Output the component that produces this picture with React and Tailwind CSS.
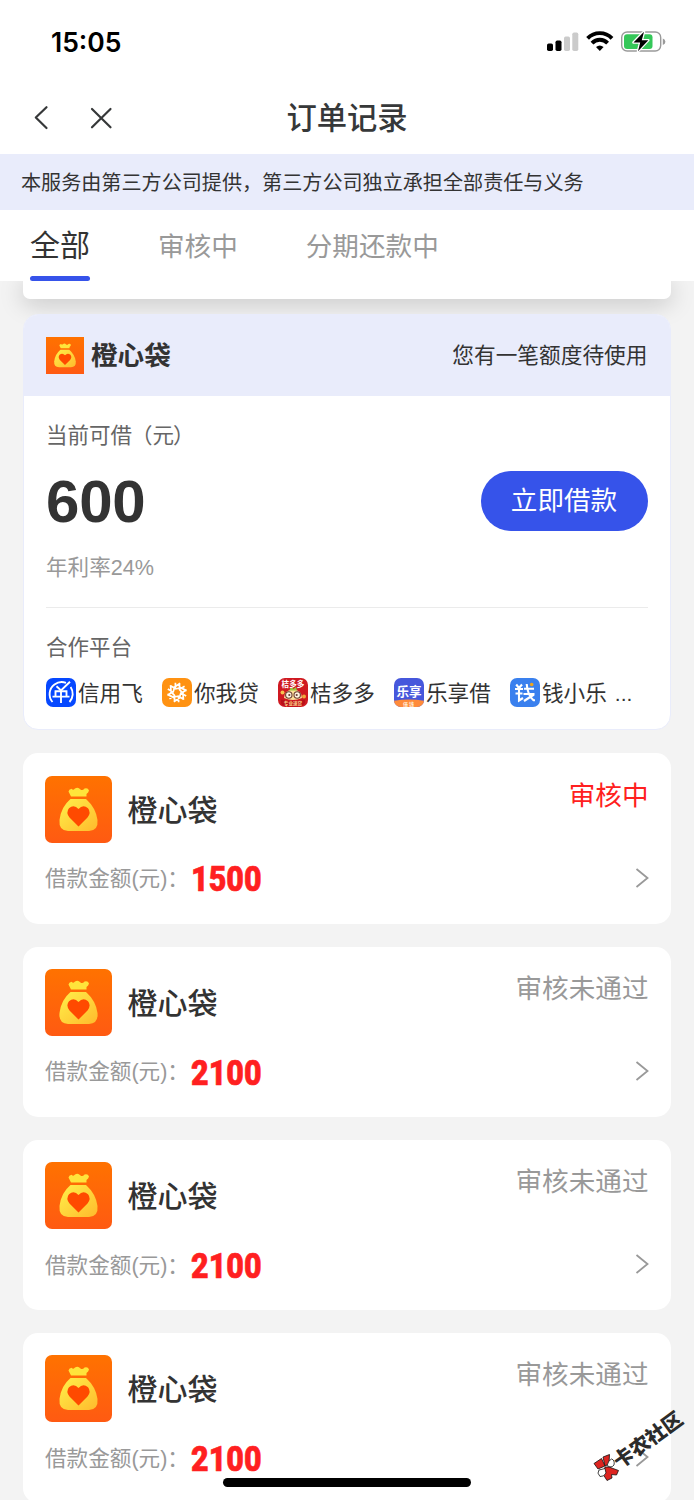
import React from 'react';

const orders = [
  { id: 1, amount: '1500', status: '审核中', pending: true },
  { id: 2, amount: '2100', status: '审核未通过' },
  { id: 3, amount: '2100', status: '审核未通过' },
  { id: 4, amount: '2100', status: '审核未通过' },
];

const MoneyBag = ({ className }) => (
  <svg viewBox="0 0 67 67" preserveAspectRatio="none" className={className}>
    <defs>
      <linearGradient id="bagBg" x1="0" y1="0" x2="0" y2="1">
        <stop offset="0" stopColor="#ff7200" />
        <stop offset="1" stopColor="#ff5a12" />
      </linearGradient>
      <linearGradient id="bagFill" x1="0" y1="0" x2="1" y2="1">
        <stop offset="0" stopColor="#fff04a" />
        <stop offset="1" stopColor="#ffba2c" />
      </linearGradient>
    </defs>
    <rect width="67" height="67" fill="url(#bagBg)" />
    <path
      d="M26 20.5 L23.5 15.5 Q23.8 13.3 26.5 12.7 Q28.5 14.7 30 12.5 Q33 10.5 35.5 13.5 Q37.5 15 39.5 12.5 Q43 11.5 44 14.5 Q43.5 16.5 41.5 18 L41.5 20.5 Z"
      fill="#ffe43b"
    />
    <path
      d="M25.5 23 H41 Q51 32 52.5 44 Q53.5 54.5 44 55 H23 Q13.5 54.5 14.5 44 Q16 31 25.5 23 Z"
      fill="url(#bagFill)"
    />
    <path
      d="M33.5 50.5 L24.5 41.5 Q20.5 36.5 24 32.2 Q29 28 33.5 33 Q38 28 43 32.2 Q46.5 36.5 42.5 41.5 Z"
      fill="#ff4a00"
    />
  </svg>
);

const XinyongfeiIcon = () => (
  <svg viewBox="0 0 30 29" className="h-[29px] w-[30px] shrink-0">
    <rect width="30" height="29" rx="7" fill="#0648ff" />
    <g fill="none" stroke="#fff" strokeWidth="1.9">
      <path d="M6.5 24 A12 12 0 0 1 8.5 6.5 A12 12 0 0 1 20 4.8" />
      <path d="M24.6 9 A12 12 0 0 1 23.5 24" />
      <path d="M10.5 8.3 L15 12.5 L24 3.8" />
      <path d="M8.6 13.2 H21.4 M9.5 13 V18 M20.5 13 V18 M15 13 V25" />
      <path d="M6.5 18.6 H23.5" />
    </g>
  </svg>
);

const NiwodaiIcon = () => (
  <svg viewBox="0 0 30 29" className="h-[29px] w-[30px] shrink-0">
    <rect width="30" height="29" rx="7" fill="#ff9212" />
    <g fill="none" stroke="#fff" strokeWidth="1.7">
      {[0, 60, 120, 180, 240, 300].map((angle) => (
        <path
          key={angle}
          d="M11.5 9.8 L18.2 5.2 M13.4 4.8 V11.5 M17.5 6 V11 M13.2 11 L17.8 10"
          transform={`rotate(${angle} 15 14.5)`}
        />
      ))}
    </g>
    <circle cx="15" cy="14.5" r="1.6" fill="#ff9212" />
  </svg>
);

const JuduoduoIcon = () => (
  <svg viewBox="0 0 30 29" className="h-[29px] w-[30px] shrink-0">
    <rect width="30" height="29" rx="7" fill="#cf1921" />
    <circle cx="4.5" cy="14.5" r="2" fill="#f8c34f" />
    <circle cx="26" cy="18.5" r="2" fill="#f0a83c" />
    <path d="M6 20 Q6 12 15 11.5 Q24 12 24 20 Q15 24 6 20Z" fill="#ffe09b" />
    <path d="M11 12.5 L13.5 9 L15.5 11 L18 9 L19 12.5Z" fill="#98c83e" />
    <g fill="#fff5e2" stroke="#6c3c32" strokeWidth="1.1">
      <circle cx="10.8" cy="17" r="3.2" />
      <circle cx="19.2" cy="17" r="3.2" />
    </g>
    <circle cx="11.3" cy="17" r="1.1" fill="#6c3c32" />
    <circle cx="18.7" cy="17" r="1.1" fill="#6c3c32" />
    <path d="M3 21.5 Q15 25 27 21.5 V25 Q25 28.5 20 28.5 H10 Q4 28 3 25Z" fill="#b81018" />
    <text x="15" y="8.9" fontSize="7.6" fontWeight="700" textAnchor="middle" fill="#fff">桔多多</text>
    <text x="15" y="27.2" fontSize="4.6" fontWeight="700" textAnchor="middle" fill="#ffd08a">专业速贷</text>
  </svg>
);

const LexiangIcon = () => (
  <svg viewBox="0 0 30 29" className="h-[29px] w-[30px] shrink-0">
    <defs>
      <clipPath id="lexiangClip">
        <rect width="30" height="29" rx="7" />
      </clipPath>
    </defs>
    <g clipPath="url(#lexiangClip)">
      <rect width="30" height="29" fill="#4657dc" />
      <path d="M0 22.7 Q15 20.5 30 22.7 V29 H0Z" fill="#ff8b3a" />
      <text x="15" y="17.5" fontSize="12.6" fontWeight="700" textAnchor="middle" fill="#fff">乐享</text>
      <text x="15" y="27.6" fontSize="5" fontWeight="700" textAnchor="middle" letterSpacing="1" fill="#ffe6cf">借钱</text>
    </g>
  </svg>
);

const QianIcon = () => (
  <svg viewBox="0 0 30 29" className="h-[29px] w-[30px] shrink-0">
    <rect width="30" height="29" rx="7" fill="#3a80ee" />
    <g fill="none" stroke="#fff" strokeWidth="2.1">
      <path d="M6.2 6.5 L9 10 M12 6.5 L9 10 M5 11 H13 M5.5 15.5 H12.5 M9 10 V22.5 L13 20" />
      <path d="M14 10.8 H24 M13.5 16 H24.5 M16.7 6 Q17.5 17 23.5 22.3 H25 M24 16.5 L14 23" />
    </g>
    <circle cx="21.7" cy="6.5" r="1.8" fill="#efa51d" />
  </svg>
);

const platforms = [
  { name: '信用飞', Icon: XinyongfeiIcon },
  { name: '你我贷', Icon: NiwodaiIcon },
  { name: '桔多多', Icon: JuduoduoIcon },
  { name: '乐享借', Icon: LexiangIcon },
  { name: '钱小乐', Icon: QianIcon },
];

const StatusBar = () => (
  <div className="flex h-[82px] items-center justify-between pr-[28px] pl-[51px]">
    <span className="pt-0.5 font-['Inter'] text-[26.5px] leading-8 font-semibold text-black">15:05</span>
    <svg viewBox="0 0 120 24" className="h-6 w-[120px]">
      <g fill="#000">
        <rect x="1" y="14.5" width="6" height="7.5" rx="1.7" />
        <rect x="9.5" y="11.5" width="6" height="10.5" rx="1.7" />
      </g>
      <g fill="#cbcbcb">
        <rect x="18" y="7.5" width="6" height="14.5" rx="1.7" />
        <rect x="26.3" y="3.5" width="6" height="18.5" rx="1.7" />
      </g>
      <g fill="none" stroke="#000" strokeWidth="3.9">
        <path d="M41.6 9.3 A17 17 0 0 1 66 9.3" />
        <path d="M46 14.1 A10.8 10.8 0 0 1 61.6 14.1" />
      </g>
      <path d="M50 18 Q53.8 15 57.6 18 L53.8 22 Z" fill="#000" />
      <rect x="75.7" y="3" width="39" height="19" rx="5.5" fill="#fff" stroke="#9a9a9a" strokeWidth="1.4" />
      <rect x="78" y="5.2" width="28.5" height="14.8" rx="3" fill="#35c759" />
      <path d="M116.8 9.5 Q119.4 10.5 119.4 12.7 Q119.4 15 116.8 16 Z" fill="#9a9a9a" />
      <path
        d="M98 2.7 L87.5 13.5 H94.2 L92 22.2 L102.3 11.2 H95.8 Z"
        fill="#000"
        stroke="#fff"
        strokeWidth="2.6"
        strokeLinejoin="round"
        paintOrder="stroke"
      />
    </svg>
  </div>
);

const NavBar = () => (
  <div className="grid h-[72px] grid-cols-3 items-center px-[30px]">
    <svg
      viewBox="0 0 90 30"
      className="h-[30px] w-[90px]"
      fill="none"
      stroke="#363839"
      strokeWidth="2.2"
      strokeLinecap="round"
      strokeLinejoin="round"
    >
      <path d="M16.5 4.2 L5.8 14.5 L16.5 25" />
      <path d="M62 6 L80.5 24.3 M80.5 6 L62 24.3" />
    </svg>
    <h1 className="pt-0.5 text-center text-[30.3px] leading-9 font-medium text-[#363839]">订单记录</h1>
  </div>
);

const OfferCard = () => (
  <section className="mr-[23px] ml-[22.5px] mt-[14.5px] h-[416.5px] overflow-hidden rounded-[15px] border border-[#e9ecfb] bg-white">
    <div className="flex h-[81px] items-center justify-between bg-[#e9ecfb] px-[22.5px]">
      <div className="flex items-center gap-[7px]">
        <MoneyBag className="h-[37px] w-[38px]" />
        <span className="pt-0.5 text-[26.6px] leading-9 font-bold text-[#333]">橙心袋</span>
      </div>
      <span className="pt-0.5 text-[21.7px] text-[#333]">您有一笔额度待使用</span>
    </div>
    <div className="px-[22.5px] pt-6">
      <p className="text-[21.5px] leading-8 text-[#666]">
        当前可借<span className="-ml-[1px]">（元</span>
        <span className="-ml-[1px]">）</span>
      </p>
      <div className="mt-[19px] flex h-[60px] items-center justify-between">
        <span className="pt-[3px] text-[60px] leading-[60px] font-bold tracking-[-0.2px] text-[#333]">600</span>
        <button className="h-[60px] w-[167px] rounded-full bg-[#3653ea] pt-px text-[26.6px] leading-9 text-white">
          立即借款
        </button>
      </div>
      <p className="mt-[21px] h-8 text-[21.6px] leading-8 text-[#999]">年利率24%</p>
      <div className="mt-[23px] border-t-[1.5px] border-[#ebebeb]" />
      <p className="mt-6 h-8 text-[21.5px] leading-8 text-[#666]">合作平台</p>
      <div className="mt-[13px] flex items-center">
        {platforms.map(({ name, Icon }) => (
          <div key={name} className="flex w-[116px] shrink-0 items-center gap-[2px]">
            <Icon />
            <span className="pt-0.5 text-[21.6px] leading-[30px] whitespace-nowrap text-[#333]">{name}</span>
            {name === '钱小乐' && (
              <span className="ml-[6px] pt-0.5 text-[21px] leading-[30px] text-[#333]">...</span>
            )}
          </div>
        ))}
      </div>
    </div>
  </section>
);

const OrderCard = ({ order }) => (
  <section className="h-[170.4px] shrink-0 rounded-[15px] bg-white px-[22.5px] pt-[22.5px]">
    <div className="flex h-[67px] justify-between">
      <div className="flex items-center gap-[15.5px]">
        <MoneyBag className="h-[67px] w-[67px] rounded-[7px]" />
        <span className="pt-[3px] text-[30px] leading-10 font-medium text-[#333]">橙心袋</span>
      </div>
      <span
        className={
          order.pending
            ? 'pt-px text-[26.6px] leading-[38px] text-[#ff2020]'
            : 'pt-px text-[26.6px] leading-[38px] text-[#999]'
        }
      >
        {order.status}
      </span>
    </div>
    <div className="mt-[15px] flex h-10 items-center">
      <span className="w-[146px] pt-[3px] text-[21.6px] whitespace-nowrap text-[#999]">借款金额(元)：</span>
      <span className="origin-left scale-x-[0.87] pt-[5px] font-['Roboto'] text-[35px] leading-10 font-black text-[#ff2020] [-webkit-text-stroke:0.6px_#ff2020]">
        {order.amount}
      </span>
      <svg viewBox="0 0 14 20" className="ml-auto h-5 w-[14px]" fill="none" stroke="#999" strokeWidth="1.8">
        <path d="M1.5 1 L12.5 10 L1.5 19" />
      </svg>
    </div>
  </section>
);

const Watermark = () => (
  <div className="absolute top-[1408px] left-[592px] h-[76px] w-[98px]">
    <svg viewBox="0 0 27 27" className="absolute top-[46px] left-px h-[27px] w-[27px]">
      <g fill="#dd2420" stroke="#111" strokeWidth="0.8">
        <path d="M1 9.5 L8.5 4.5 L12 12 L5 15 Z" />
        <path d="M10 3 L16.5 0.5 L16 10 L12 12 Z" />
        <path d="M12 13 L16 13 L25.5 16.5 L23.5 21 L18.5 20.5 L19 24 L14 26.5 L10.5 21 Z" />
      </g>
      <g fill="#fff" stroke="#111" strokeWidth="0.8">
        <path d="M14 11.5 Q15.5 6 18.5 5 Q22 6 21 11 Q18.5 14.5 14 11.5Z" />
        <path d="M12 14.5 L13 19 Q11 23 7 22.5 Q3.5 19 6 16 Z" />
      </g>
    </svg>
    <span className="absolute top-[18px] left-[16px] origin-center -rotate-[36deg] text-[20px] leading-7 font-black whitespace-nowrap text-[#2b2b2b]">
      卡农社区
    </span>
  </div>
);

const App = () => {
  return (
    <div className="relative flex h-[1500px] w-[694px] flex-col overflow-hidden bg-[#f3f3f3] font-['Liberation_Sans','Noto_Sans_CJK_SC',sans-serif]">
      <header className="shrink-0 bg-white">
        <StatusBar />
        <NavBar />
        <div className="flex h-14 items-center bg-[#e9ecfb] px-[21px] pt-[3px] text-[20.1px] text-[#333]">
          本服务由第三方公司提供，第三方公司独立承担全部责任与义务
        </div>
        <nav className="flex h-[71px] px-[30px] text-[26.6px] text-[#999]">
          <div className="flex h-[71px] w-[60px] flex-col justify-between text-[30px] text-[#333]">
            <span className="pt-4 leading-10">全部</span>
            <span className="h-[5px] rounded-full bg-[#3653ea]" />
          </div>
          <span className="ml-[68px] pt-[17px] leading-10">审核中</span>
          <span className="ml-[68px] pt-[17px] leading-10">分期还款中</span>
        </nav>
      </header>

      <main className="grow overflow-hidden">
        {/* bottom edge of the card scrolled under the tabs */}
        <div className="mr-[23px] ml-[22.5px] h-[18px] rounded-b-[7px] bg-white shadow-[0_4px_24px_rgba(0,0,0,0.22)]" />
        <div className="relative">
          <OfferCard />
          <div className="mt-[23.4px] mr-[23px] ml-[22.5px] flex flex-col gap-[22.8px]">
            {orders.map((order) => (
              <OrderCard key={order.id} order={order} />
            ))}
          </div>
        </div>
      </main>

      <Watermark />
      <div className="absolute bottom-[13px] left-[223px] h-[9px] w-[248px] rounded-full bg-black" />
    </div>
  );
};

export default App;
